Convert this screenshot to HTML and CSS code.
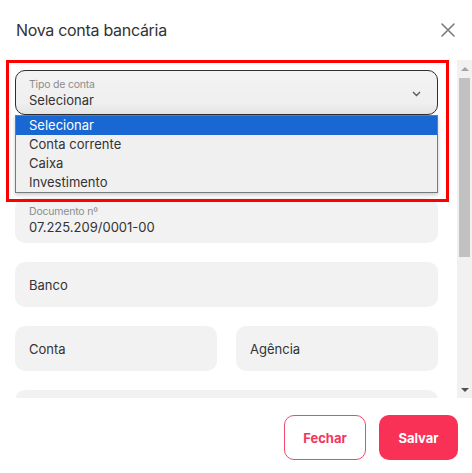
FILE: index.html
```html
<!DOCTYPE html>
<html lang="pt-BR">
<head>
<meta charset="utf-8">
<title>Nova conta bancária</title>
<link rel="stylesheet" href="styles.css">
</head>
<body>
<div class="dialog">
  <header class="header">
    <h1 class="title">Nova conta bancária</h1>
    <button class="close" aria-label="Fechar">
      <svg width="14" height="14" viewBox="0 0 14 14"><path d="M1 1L13 13M13 1L1 13" stroke="#7a7a7a" stroke-width="1.6" fill="none" stroke-linecap="round"/></svg>
    </button>
  </header>

  <div class="body">
    <div class="content">
      <div class="select-wrap">
        <div class="field labelled select">
          <span class="label">Tipo de conta</span>
          <span class="value">Selecionar</span>
          <svg class="chevron" width="9" height="6" viewBox="0 0 9 6"><path d="M1 1L4.5 4.5L8 1" stroke="#555" stroke-width="1.3" fill="none"/></svg>
        </div>
        <ul class="dropdown">
          <li class="option active">Selecionar</li>
          <li class="option">Conta corrente</li>
          <li class="option">Caixa</li>
          <li class="option">Investimento</li>
        </ul>
      </div>

      <div class="field"></div>

      <div class="field labelled">
        <span class="label">Documento nº</span>
        <span class="value">07.225.209/0001-00</span>
      </div>

      <div class="field"><span class="value">Banco</span></div>

      <div class="row">
        <div class="field"><span class="value">Conta</span></div>
        <div class="field"><span class="value">Agência</span></div>
      </div>

      <div class="field"></div>
    </div>

    <div class="scrollbar">
      <div class="sb-btn"><span class="tri up"></span></div>
      <div class="sb-track"><div class="sb-thumb"></div></div>
      <div class="sb-btn"><span class="tri down"></span></div>
    </div>
  </div>

  <footer class="footer">
    <button class="btn outline">Fechar</button>
    <button class="btn primary">Salvar</button>
  </footer>

  <div class="highlight"></div>
</div>
</body>
</html>
```

FILE: styles.css
```css
* { box-sizing: border-box; }

html, body {
  margin: 0;
  padding: 0;
  background: #ffffff;
}

body {
  font-family: Inter, "Noto Sans", "Liberation Sans", sans-serif;
  color: #333333;
}

.dialog {
  position: relative;
  width: 472px;
  height: 473px;
  display: flex;
  flex-direction: column;
  background: #ffffff;
  overflow: hidden;
}

.header {
  height: 60px;
  flex: 0 0 60px;
  display: flex;
  align-items: center;
  justify-content: space-between;
  padding: 0 17px 0 16px;
}

.title {
  margin: 0;
  font-size: 16px;
  font-weight: 400;
  letter-spacing: -0.3px;
  color: #333333;
}

.close {
  border: 0;
  background: none;
  padding: 0;
  width: 14px;
  height: 14px;
  display: flex;
  cursor: pointer;
}

.body {
  flex: 0 0 338px;
  height: 338px;
  display: flex;
}

.content {
  flex: 1;
  overflow: hidden;
  padding: 10px 19px 0 15px;
  display: flex;
  flex-direction: column;
  gap: 19px;
}

.field {
  flex: 0 0 45px;
  height: 45px;
  border-radius: 10px;
  background: #f2f2f2;
  display: flex;
  flex-direction: column;
  justify-content: center;
  padding: 0 14px;
}

.field.labelled {
  justify-content: flex-start;
  padding-top: 7px;
}

.label {
  font-size: 10.5px;
  line-height: 13px;
  color: #8c8c8c;
  letter-spacing: -0.2px;
}

.value {
  font-size: 13px;
  line-height: 18px;
  color: #333333;
}

.select-wrap {
  position: relative;
  flex: 0 0 45px;
}

.select {
  position: relative;
  border: 1px solid #2e2e2e;
  background: linear-gradient(#f3f3f3 0%, #efefef 75%, #e4e4e4 100%);
  padding-left: 13px;
  padding-top: 6px;
}

.chevron {
  position: absolute;
  right: 16px;
  top: 20px;
}

.dropdown {
  position: absolute;
  top: 45px;
  left: 0;
  right: 0;
  margin: 0;
  padding: 0;
  list-style: none;
  background: #f0f0f0;
  border: 1px solid #7a7a7a;
  box-shadow: 0 2px 4px rgba(0, 0, 0, 0.2);
  z-index: 2;
}

.option {
  height: 19px;
  line-height: 19px;
  padding-left: 13px;
  font-size: 13px;
  color: #333333;
}

.option.active {
  background: #1967d2;
  color: #ffffff;
}

.row {
  display: grid;
  grid-template-columns: 1fr 1fr;
  gap: 19px;
  flex: 0 0 45px;
}

.scrollbar {
  flex: 0 0 15px;
  width: 15px;
  background: #f1f1f1;
  display: flex;
  flex-direction: column;
}

.sb-btn {
  flex: 0 0 17px;
  display: flex;
  align-items: center;
  justify-content: center;
}

.tri {
  width: 0;
  height: 0;
  border-left: 4px solid transparent;
  border-right: 4px solid transparent;
}

.tri.up { border-bottom: 4px solid #a3a3a3; }
.tri.down { border-top: 4px solid #505050; }

.sb-track {
  flex: 1;
  padding: 1px 2px 0;
}

.sb-thumb {
  height: 179px;
  background: #c1c1c1;
}

.footer {
  flex: 1;
  display: flex;
  justify-content: flex-end;
  align-items: flex-start;
  gap: 13px;
  padding: 17px 14px 0 0;
}

.btn {
  height: 45px;
  border-radius: 10px;
  font-family: Inter, "Noto Sans", "Liberation Sans", sans-serif;
  font-size: 13px;
  font-weight: 700;
  cursor: pointer;
}

.btn.outline {
  width: 82px;
  background: #ffffff;
  border: 1px solid #f2486a;
  color: #f2365d;
}

.btn.primary {
  width: 79px;
  background: #f93157;
  border: 0;
  color: #ffffff;
}

.highlight {
  position: absolute;
  left: 6px;
  top: 60px;
  width: 443px;
  height: 142px;
  border: 3px solid #ff0000;
  pointer-events: none;
  z-index: 5;
}
```
